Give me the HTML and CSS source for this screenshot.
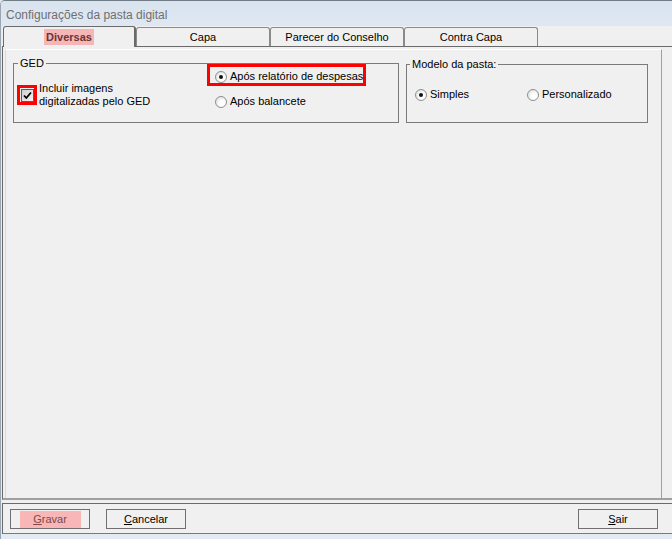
FILE: index.html
```html
<!DOCTYPE html>
<html lang="pt-BR">
<head>
  <meta charset="UTF-8">
  <title>Configurações da pasta digital</title>
  <link rel="stylesheet" href="styles.css">
</head>
<body>

<div class="janela">
  <!-- Barra de título -->
  <div class="titulo">Configurações da pasta digital</div>

  <div class="cliente">
    <!-- Abas -->
    <div class="abas">
      <div class="aba ativa"><span class="marca">Diversas</span></div>
      <div class="aba">Capa</div>
      <div class="aba">Parecer do Conselho</div>
      <div class="aba">Contra Capa</div>
    </div>

    <!-- Conteúdo da aba Diversas -->
    <div class="painel">
      <div class="painel-interno">
        <div class="grupos">

          <div class="grupo grupo-ged">
            <span class="legenda">GED</span>
            <div class="ged-check">
              <div class="realce-check">
                <span class="caixa">
                  <svg width="11" height="11" viewBox="0 0 11 11"><path d="M2 5.5 L4.3 8 L9 2.5" fill="none" stroke="#000" stroke-width="1.8"/></svg>
                </span>
              </div>
              <div class="rotulo">Incluir imagens<br>digitalizadas pelo GED</div>
            </div>
            <div class="ged-radios">
              <div class="realce-radio">
                <div class="opcao"><span class="radio marcado"></span>Após relatório de despesas</div>
              </div>
              <div class="opcao segunda"><span class="radio"></span>Após balancete</div>
            </div>
          </div>

          <div class="grupo grupo-modelo">
            <span class="legenda">Modelo da pasta:</span>
            <div class="opcao opcao-simples"><span class="radio marcado"></span>Simples</div>
            <div class="opcao"><span class="radio"></span>Personalizado</div>
          </div>

        </div>
      </div>
    </div>

    <!-- Botões -->
    <div class="rodape">
      <button class="botao"><span class="realce-botao"><u>G</u>ravar</span></button>
      <button class="botao"><span><u>C</u>ancelar</span></button>
      <button class="botao sair"><span><u>S</u>air</span></button>
    </div>
  </div>
</div>

</body>
</html>
```

FILE: styles.css
```css
* {
  box-sizing: border-box;
}

body {
  margin: 0;
  font-family: "Liberation Sans", Arial, sans-serif;
  font-size: 11px;
  color: #000;
  background: #e3eaf3;
}

/* Janela */
.janela {
  width: 672px;
  height: 539px;
  background: #e3eaf3;
  border-top: 1px solid #6f7b87;
  border-left: 1px solid #9aa6b3;
  border-top-left-radius: 5px;
  overflow: hidden;
}

.titulo {
  height: 25px;
  padding: 7px 0 0 5px;
  font-size: 12px;
  line-height: 15px;
  color: #707070;
  background: linear-gradient(#d9e3ee, #dfe8f2);
}

.cliente {
  margin-left: 1px;
  height: 508px;
  background: #f0f0f0;
}

/* Abas */
.abas {
  display: flex;
  align-items: flex-end;
  height: 20px;
  padding-left: 1px;
}

.aba {
  width: 134px;
  height: 19px;
  border: 1px solid #8a8a8a;
  border-bottom: none;
  border-radius: 3px 3px 0 0;
  display: flex;
  align-items: center;
  justify-content: center;
  background: #f0f0f0;
}

.aba.ativa {
  width: 133px;
  height: 21px;
  margin-bottom: -1px;
  position: relative;
  z-index: 1;
  border-color: #6a6a6a;
  border-right-width: 2px;
}

.marca {
  display: inline-block;
  width: 50px;
  line-height: 16px;
  text-align: center;
  font-weight: bold;
  color: #6a3535;
  background: #f6b6b6;
}

/* Painel */
.painel {
  height: 454px;
  border-top: 1px solid #6a6a6a;
  border-left: 1px solid #6a6a6a;
  border-bottom: 2px solid #a0a0a0;
  padding: 2px 0 0 2px;
}

.painel-interno {
  width: 657px;
  height: 449px;
  border-top: 1px solid #fff;
  border-left: 1px solid #dadada;
  border-right: 1px solid #a0a0a0;
}

.grupos {
  display: flex;
  align-items: flex-start;
  gap: 7px;
  padding: 13px 0 0 7px;
}

.grupo {
  position: relative;
  border: 1px solid #7a7a7a;
}

.legenda {
  position: absolute;
  top: -7px;
  left: 4px;
  padding: 0 2px;
  line-height: 13px;
  background: #f0f0f0;
}

.grupo-ged {
  width: 386px;
  height: 60px;
  display: flex;
}

.grupo-modelo {
  width: 242px;
  height: 59px;
  margin-top: 1px;
  display: flex;
  padding: 23px 0 0 8px;
}

.grupo-modelo .legenda {
  left: 3px;
}

/* Caixa de seleção */
.ged-check {
  width: 190px;
  margin: 18px 0 0 3px;
  display: flex;
  align-items: center;
  gap: 2px;
  align-self: flex-start;
  flex: none;
}

.realce-check {
  width: 20px;
  height: 20px;
  border: 3px solid #ff0000;
  display: flex;
  align-items: center;
  justify-content: center;
  flex: none;
}

.caixa {
  width: 13px;
  height: 13px;
  border: 1px solid #5c5c5c;
  background: linear-gradient(135deg, #cfcfcf, #f2f2f2);
  display: flex;
  align-items: center;
  justify-content: center;
}

.caixa svg {
  display: block;
}

.rotulo {
  line-height: 13px;
}

/* Opções */
.ged-radios {
  display: flex;
  flex-direction: column;
}

.realce-radio {
  width: 159px;
  height: 22px;
  border: 3px solid #ff0000;
  padding: 3px 0 0 5px;
  display: flex;
  align-items: center;
}

.opcao {
  display: flex;
  align-items: center;
  gap: 3px;
  line-height: 13px;
  white-space: nowrap;
}

.opcao.segunda {
  margin: 9px 0 0 8px;
}

.opcao-simples {
  width: 112px;
  align-self: flex-start;
}

.grupo-modelo .opcao {
  align-self: flex-start;
}

.radio {
  width: 12px;
  height: 12px;
  flex: none;
  border-radius: 50%;
  border: 1px solid #8f8f8f;
  background: radial-gradient(circle at 65% 65%, #fff 30%, #d6d6d6);
  display: flex;
  align-items: center;
  justify-content: center;
}

.radio.marcado::after {
  content: '';
  width: 4px;
  height: 4px;
  border-radius: 50%;
  background: #111;
}

/* Rodapé */
.rodape {
  margin-top: 3px;
  height: 31px;
  border-top: 1px solid #6a6a6a;
  border-left: 1px solid #6a6a6a;
  border-bottom: 1px solid #7a7a7a;
  display: flex;
  align-items: flex-start;
  gap: 16px;
  padding: 5px 14px 0 7px;
}

.botao {
  width: 80px;
  height: 20px;
  padding: 0;
  border: 1px solid #707070;
  background: #f0f0f0;
  font: inherit;
  color: #000;
  display: flex;
  align-items: center;
  justify-content: center;
}

.botao.sair {
  margin-left: auto;
}

.realce-botao {
  width: 61px;
  height: 17px;
  line-height: 17px;
  text-align: center;
  color: #7d4848;
  background: #f8b6b6;
}
```
